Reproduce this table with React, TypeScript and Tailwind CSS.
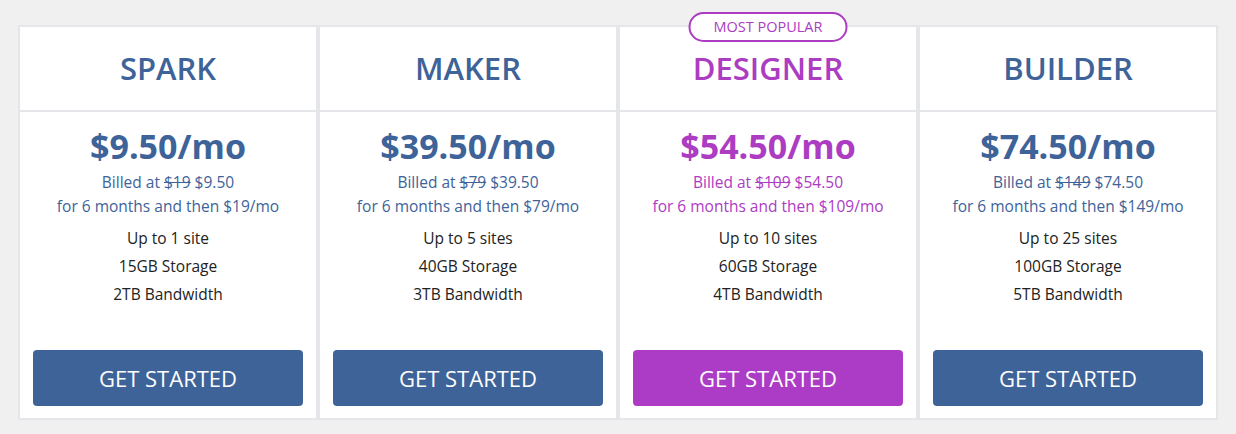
import React from "react";

type Plan = {
  name: string;
  price: string;
  was: string;
  now: string;
  after: string;
  sites: string;
  storage: string;
  bandwidth: string;
  popular?: boolean;
};

const plans: Plan[] = [
  { name: "SPARK", price: "$9.50/mo", was: "$19", now: "$9.50", after: "$19/mo", sites: "Up to 1 site", storage: "15GB Storage", bandwidth: "2TB Bandwidth" },
  { name: "MAKER", price: "$39.50/mo", was: "$79", now: "$39.50", after: "$79/mo", sites: "Up to 5 sites", storage: "40GB Storage", bandwidth: "3TB Bandwidth" },
  { name: "DESIGNER", price: "$54.50/mo", was: "$109", now: "$54.50", after: "$109/mo", sites: "Up to 10 sites", storage: "60GB Storage", bandwidth: "4TB Bandwidth", popular: true },
  { name: "BUILDER", price: "$74.50/mo", was: "$149", now: "$74.50", after: "$149/mo", sites: "Up to 25 sites", storage: "100GB Storage", bandwidth: "5TB Bandwidth" },
];

const PlanCard = ({ plan }: { plan: Plan }) => {
  const pop = plan.popular;
  return (
    <div className="relative flex h-[395px] w-[300px] flex-col border-2 border-[#e5e6ea] bg-white">
      {pop && (
        <div className="absolute left-1/2 top-[-15px] flex h-[30px] w-[159px] -translate-x-1/2 items-center justify-center rounded-full border-2 border-[#ac3cc2] bg-white text-[14.5px] text-[#ac3cc2]">
          MOST POPULAR
        </div>
      )}
      <div className="flex h-[85px] items-center justify-center border-b-2 border-[#e5e6ea]">
        <h2 className={`text-[31px] font-semibold ${pop ? "text-[#ac3cc2]" : "text-[#3e6399]"}`}>{plan.name}</h2>
      </div>
      <div className={`flex flex-1 flex-col items-center pt-[12px] ${pop ? "text-[#ac3cc2]" : "text-[#3e6399]"}`}>
        <div className="text-[34px] font-bold leading-[44px]">{plan.price}</div>
        <div className="mt-[2px] text-[15.5px] leading-6">
          Billed at <span className="line-through">{plan.was}</span> {plan.now}
        </div>
        <div className="text-[15.5px] leading-6">for 6 months and then {plan.after}</div>
        <ul className="mt-[6px] text-center text-[15.5px] leading-[28px] text-[#222]">
          <li>{plan.sites}</li>
          <li>{plan.storage}</li>
          <li>{plan.bandwidth}</li>
        </ul>
        <div className="mt-auto w-full px-[13px] pb-[12px]">
          <button className={`h-[56px] w-full rounded-[4px] text-[22px] text-white ${pop ? "bg-[#ac3cc5]" : "bg-[#3e6399]"}`}>
            GET STARTED
          </button>
        </div>
      </div>
    </div>
  );
};

export default function App() {
  return (
    <div className="min-h-screen bg-[#f0f0f0] pt-[25px] font-['Open_Sans',sans-serif]">
      <div className="mx-auto flex w-[1200px]">
        {plans.map((p) => (
          <PlanCard key={p.name} plan={p} />
        ))}
      </div>
    </div>
  );
}
